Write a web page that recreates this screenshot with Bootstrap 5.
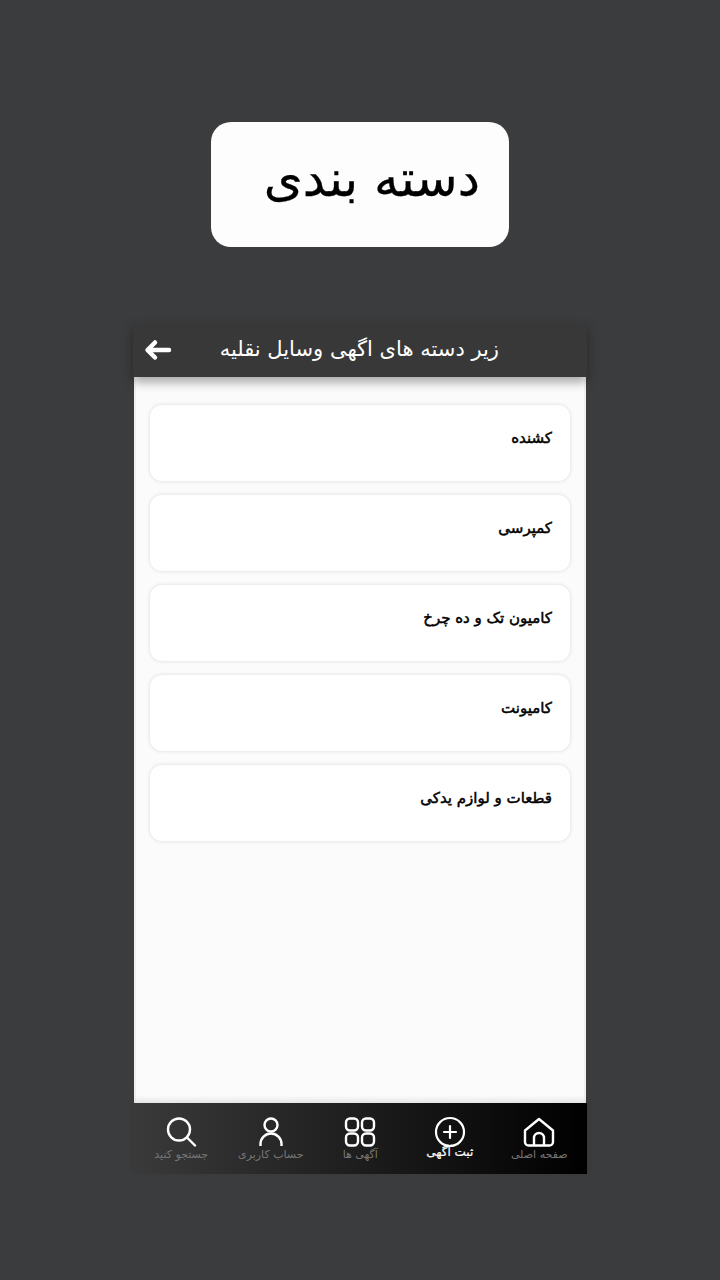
<!DOCTYPE html>
<html lang="fa" dir="rtl">
<head>
<meta charset="utf-8">
<title>دسته بندی</title>
<link href="https://cdn.jsdelivr.net/npm/bootstrap@5.3.0/dist/css/bootstrap.min.css" rel="stylesheet">
<style>
html,body{margin:0;height:1280px;overflow:hidden}
body{background:#3b3c3e;font-family:"DejaVu Sans",sans-serif;padding-top:122px}
.hero-box{width:298px;height:125px;background:#fdfdfd;border-radius:20px;margin:0 auto 76px;color:#000;font-size:50px;line-height:1;padding:32px 29px 0 0;-webkit-text-stroke:.3px #000}
.phone{width:452px;height:851px;margin-right:134px;background:#fbfbfb}
.top-bar{height:54px;background:#383838;color:#fff;font-size:21px;box-shadow:0 5px 10px rgba(0,0,0,.35);margin:0 -1px;padding:0 88px 0 11px;position:relative}
.list-area{height:726px;padding:28px 13px 0 13px;border-right:2px solid #f0f0f0;border-left:2px solid #f0f0f0}
.cat-item{height:76px;background:#fff;border-radius:12px;margin:0 1px 14px;box-shadow:0 0 3px 1px #e4e6ec;padding:21px 18px 0 0;font-size:15px;color:#000;line-height:24px;-webkit-text-stroke:.5px #000}
.bottom-bar{height:71px;background:linear-gradient(to left,#000,#3a3a3a);margin:0 -1px;padding:0 3px 0 0;box-shadow:0 -3px 6px rgba(0,0,0,.1);position:relative}
.tab{width:89.500px;color:#777;font-size:11px;line-height:13px;padding-top:14px}
.tab svg{display:block;margin:0 auto 1px}
.tab-on{color:#fff;font-size:12px;-webkit-text-stroke:.2px #fff}
.tab-on svg{margin-top:-1px;margin-bottom:-2px}
</style>
</head>
<body>
<div class="hero-box text-end">دسته بندی</div>
<div class="phone d-flex flex-column">
  <div class="top-bar d-flex align-items-center justify-content-between">
    <span>زیر دسته های اگهی وسایل نقلیه</span>
    <svg width="28" height="22" viewBox="0 0 28 22" fill="none" stroke="#fff" stroke-width="4.500" stroke-linecap="round" stroke-linejoin="round"><path d="M25 11H4M11 3.500L3.500 11l7.500 7.500"/></svg>
  </div>
  <div class="list-area flex-grow-1">
    <div class="cat-item">کشنده</div>
    <div class="cat-item">کمپرسی</div>
    <div class="cat-item">کامیون تک و ده چرخ</div>
    <div class="cat-item">کامیونت</div>
    <div class="cat-item">قطعات و لوازم یدکی</div>
  </div>
  <div class="bottom-bar d-flex justify-content-start">
    <div class="tab text-center">
      <svg width="32" height="30" viewBox="0 0 32 30" fill="none" stroke="#fff" stroke-width="2.400" stroke-linejoin="round"><path d="M2 13.500L16 2l14 11.500V25a3.500 3.500 0 0 1-3.500 3.500h-21A3.500 3.500 0 0 1 2 25z"/><path d="M11 28.500V21a5 5 0 0 1 10 0v7.500"/></svg>
      صفحه اصلی
    </div>
    <div class="tab tab-on text-center">
      <svg width="32" height="32" viewBox="0 0 32 32" fill="none" stroke="#fff" stroke-width="2.200" stroke-linecap="round"><circle cx="16" cy="16" r="14"/><path d="M16 10v12M10 16h12"/></svg>
      ثبت آگهی
    </div>
    <div class="tab text-center">
      <svg width="32" height="30" viewBox="0 0 32 30" fill="none" stroke="#fff" stroke-width="2.400"><rect x="2" y="1.500" width="12" height="12" rx="4"/><rect x="18" y="1.500" width="12" height="12" rx="4"/><rect x="2" y="16.500" width="12" height="12" rx="4"/><rect x="18" y="16.500" width="12" height="12" rx="4"/></svg>
      آگهی ها
    </div>
    <div class="tab text-center">
      <svg width="32" height="30" viewBox="0 0 32 30" fill="none" stroke="#fff" stroke-width="2.400"><circle cx="16" cy="8" r="6.500"/><path d="M5.500 29v-2a10.500 10.500 0 0 1 21 0v2"/></svg>
      حساب کاربری
    </div>
    <div class="tab text-center">
      <svg width="32" height="30" viewBox="0 0 32 30" fill="none" stroke="#fff" stroke-width="2.400" stroke-linecap="round"><circle cx="14" cy="12.500" r="11"/><path d="M22 20.500l8 8"/></svg>
      جستجو کنید
    </div>
  </div>
</div>
<script src="https://cdn.jsdelivr.net/npm/bootstrap@5.3.0/dist/js/bootstrap.bundle.min.js"></script>
</body>
</html>
